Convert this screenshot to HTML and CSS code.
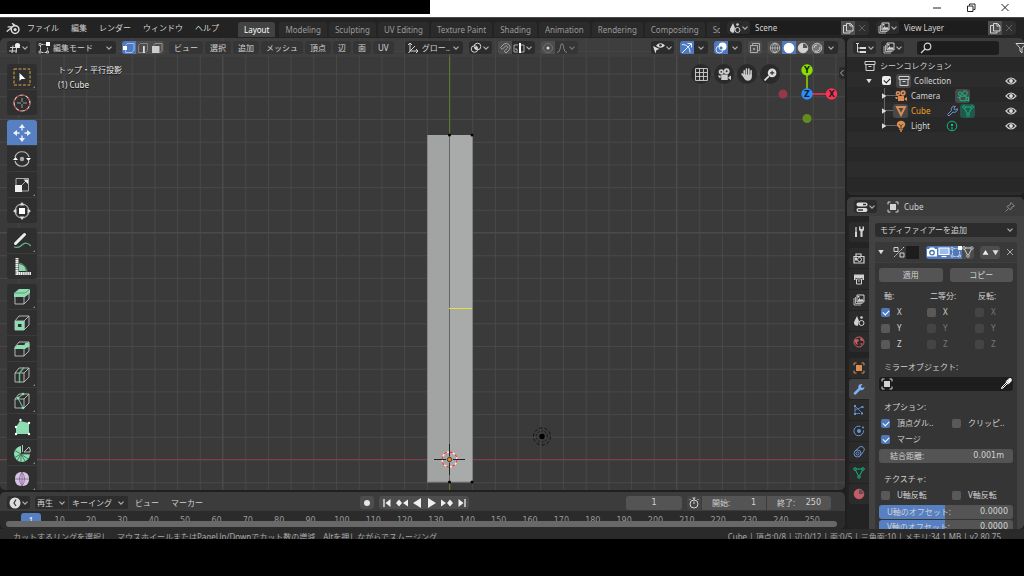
FILE: index.html
```html
<!DOCTYPE html>
<html lang="ja">
<head>
<meta charset="utf-8">
<meta name="viewport" content="width=device-width, initial-scale=1">
<title>Blender</title>
<link rel="stylesheet" href="styles.css">
</head>
<body>
<svg class="defs" aria-hidden="true">
  <symbol id="chev" viewBox="0 0 8 8"><path d="M1.5 2.7 4 5.2 6.500 2.700" fill="none" stroke="currentColor" stroke-width="1.2"/></symbol>
  <symbol id="vmode" viewBox="0 0 12 12"><path d="M1 5.500h10M0 9h8M4 3.500 3 11M7.500 6 7 11" fill="none" stroke="currentColor"/><circle cx="8.500" cy="3.500" r="2.600" fill="#eee"/></symbol>
  <symbol id="edit" viewBox="0 0 12 12"><path d="M2.500 3.500v6M3.500 2.500h4M3.500 10.500h5M9.500 5.500v4" stroke="currentColor" stroke-dasharray="2 1"/><path d="M1 1.500h2v2H1zM1 9h2v2H1zM8.500 9h2v2h-2z" fill="none" stroke="currentColor" stroke-width=".8"/><path d="M8 0h4v4H8z" fill="#fff"/></symbol>
  <symbol id="vert" viewBox="0 0 12 12"><path d="M2.500 3.500 4 1.500h7v6.500l-2 2.500H2.500V8" fill="none" stroke="#a9c5ef" stroke-width=".9"/><path d="M0 4h4v4H0z" fill="#fff"/></symbol>
  <symbol id="edge" viewBox="0 0 12 12"><path d="M1.500 10.500v-7l2-2h7v7l-2 2z" fill="none" stroke="#888" stroke-width=".9"/><path d="M6 4h1.800v7H6z" fill="#ddd"/></symbol>
  <symbol id="face" viewBox="0 0 12 12"><path d="M2.500 3.500 4 1.500h7v7l-2 2" fill="none" stroke="#999" stroke-width=".9"/><path d="M1 4h7.500v7H1z" fill="#ccc"/></symbol>
  <symbol id="orient" viewBox="0 0 12 12"><path d="M3 1v8h8M3 9l5-5M1 3l2-2 2 2M9 7l2 2-2 2M1.500 11 3 9" fill="none" stroke="currentColor"/></symbol>
  <symbol id="pivot" viewBox="0 0 12 12"><circle cx="4.500" cy="7" r="3.300" fill="none" stroke="currentColor"/><circle cx="7.500" cy="4.500" r="3.300" fill="none" stroke="currentColor"/><circle cx="6" cy="6" r="1" fill="#fff"/></symbol>
  <symbol id="magnet" viewBox="0 0 12 12"><path d="M1.500 5.500 5 2a4 4 0 0 1 5.500 5.500L7 11 5.200 9.200 8.500 6A1.500 1.500 0 0 0 6.500 4L3.300 7.300z" fill="none" stroke="#a0a0a0"/></symbol>
  <symbol id="snapto" viewBox="0 0 12 12"><path d="M5 3H1v7h4M8 3h3v7H8M3 8h2M3 6v2" fill="none" stroke="#aaa"/><path d="M6 1h2v10H6z" fill="#fff"/></symbol>
  <symbol id="prop" viewBox="0 0 12 12"><circle cx="6" cy="6" r="4.500" fill="none" stroke="#707070"/><circle cx="6" cy="6" r="1.500" fill="#ddd"/></symbol>
  <symbol id="fall" viewBox="0 0 12 12"><path d="M1 10.500c4 0 3-9 5-9s1 9 5 9" fill="none" stroke="#858585"/></symbol>
  <symbol id="visib" viewBox="0 0 12 12"><path d="M3 3.500q4.500-4.500 9 0-4.500 4.500-9 0z" fill="#ddd"/><circle cx="7.500" cy="3.300" r="1.300" fill="#333"/><path d="M0 4l6.500 3-3 1-1 3.500z" fill="#ddd"/></symbol>
  <symbol id="gizmo" viewBox="0 0 12 12"><path d="M1 2.500c5 0 8 3 8 8M1 11 10 2M6.500 1.500h4v4" fill="none" stroke="#eaf1ff"/></symbol>
  <symbol id="over" viewBox="0 0 12 12"><circle cx="7.500" cy="4.500" r="4" fill="#fff"/><circle cx="4.500" cy="7.500" r="3.500" fill="none" stroke="#dce8ff"/><circle cx="6" cy="6" r="1.500" fill="#4772b3"/></symbol>
  <symbol id="xray" viewBox="0 0 12 12"><path d="M3.500 3.500V1.500h7v7h-2M1.500 3.500h7v7h-7z" fill="none" stroke="#aaa"/><path d="M4 6h2v2H4z" fill="#999"/></symbol>
  <symbol id="wire" viewBox="0 0 12 12"><circle cx="6" cy="6" r="4.800" fill="none" stroke="#bbb" stroke-width=".9"/><path d="M1 6h10M6 1v10M6 1C2.500 3 2.500 9 6 11M6 1c3.500 2 3.500 8 0 10" fill="none" stroke="#bbb" stroke-width=".8"/></symbol>
  <symbol id="solid" viewBox="0 0 12 12"><circle cx="6" cy="6" r="5.300" fill="#fff"/></symbol>
  <symbol id="mat" viewBox="0 0 12 12"><circle cx="6" cy="6" r="4.800" fill="#555" stroke="currentColor" stroke-width=".9"/><path d="M6 6V1.200a4.800 4.800 0 0 0-4.800 4.800zM6 6h4.800A4.800 4.800 0 0 1 6 10.800zM1.200 6H6v4.800A4.800 4.800 0 0 1 1.200 6z" fill="currentColor"/></symbol>
  <symbol id="rend" viewBox="0 0 12 12"><circle cx="6" cy="6" r="4.800" fill="#777" stroke="#bbb"/><path d="M3 6a3 3 0 0 1 3-3M4 9c3 1 5-1 5-4" fill="none" stroke="#ccc"/></symbol>
  <symbol id="scene" viewBox="0 0 12 12"><path d="M4 1 1 7a3 3 0 0 0 4 3.500L6 6z" fill="currentColor"/><circle cx="8.500" cy="8" r="2.500" fill="none" stroke="currentColor"/><circle cx="8.500" cy="2.500" r="1.300" fill="currentColor"/></symbol>
  <symbol id="copy" viewBox="0 0 12 12"><path d="M4.500 1.500h4l2.500 2.500v5H4.500zM8 1.500V4h3M4 3.500H1.500v7.500H8V9.500" fill="none" stroke="currentColor"/></symbol>
  <symbol id="x" viewBox="0 0 12 12"><path d="m3 3 6 6m0-6L3 9" fill="none" stroke="currentColor"/></symbol>
  <symbol id="layers" viewBox="0 0 12 12"><path d="M1 4v7h7M2.500 3v6.500H9.500" fill="none" stroke="currentColor" stroke-width=".8"/><path d="M4 1h7v7H4z" fill="none" stroke="currentColor"/><path d="M4 7.500 6.500 4 8 6l1-1.500 2 3zM4.500 2h2v1.500h-2z" fill="currentColor"/></symbol>
  <symbol id="tree" viewBox="0 0 12 12"><path d="M1 1.500h3M2.500 2v8H5M2.500 6H5" fill="none" stroke="currentColor"/><path d="M5 5h6v2H5zM5 9h6v2H5z" fill="#ddd"/></symbol>
  <symbol id="search" viewBox="0 0 12 12"><circle cx="7.500" cy="4.500" r="3.300" fill="none" stroke="currentColor" stroke-width="1.200"/><path d="m5 7-4 4" stroke="currentColor" stroke-width="1.300"/></symbol>
  <symbol id="filter" viewBox="0 0 12 12"><path d="M1 1.500h10L7 6v5L5 9V6z" fill="none" stroke="currentColor"/></symbol>
  <symbol id="coll" viewBox="0 0 12 12"><path d="M1 1.500h10v3H1zM2 4.500v6h8v-6M4.500 6.500h3" fill="none" stroke="currentColor"/></symbol>
  <symbol id="cam" viewBox="0 0 12 12"><circle cx="3" cy="3.500" r="2.400" fill="currentColor"/><circle cx="8" cy="3" r="2.700" fill="currentColor"/><path d="M3 6h6v5H3zM9.500 8.500 12 7v4L9.500 9.500zM0 7h2.500v2H1z" fill="currentColor"/><circle cx="3" cy="3.500" r=".8" fill="#333"/><circle cx="8" cy="3" r=".9" fill="#333"/></symbol>
  <symbol id="camo" viewBox="0 0 12 12"><circle cx="3" cy="3.700" r="1.700" fill="none" stroke="currentColor"/><circle cx="8" cy="3.200" r="2.300" fill="none" stroke="currentColor"/><path d="M3 6.200h6v4.500H3zM9 8.500 11.500 7v4L9 9.800M.5 7.500H3" fill="none" stroke="currentColor"/></symbol>
  <symbol id="mesh" viewBox="0 0 12 12"><path d="M2 2h8L6 10z" fill="none" stroke="currentColor"/><g fill="#2c3833" stroke="currentColor" stroke-width=".9"><circle cx="2" cy="2" r="1.300"/><circle cx="10" cy="2" r="1.300"/><circle cx="6" cy="10" r="1.300"/></g></symbol>
  <symbol id="tri" viewBox="0 0 12 12"><path d="M2 2h8L6 10z" fill="none" stroke="currentColor" stroke-width="2"/></symbol>
  <symbol id="wrench" viewBox="0 0 12 12"><path d="M1 9.500 5.500 5a3 3 0 0 1 4-3.800L8 3l.3 1.500L10 5l1.300-1.500A3 3 0 0 1 7.300 7L3 11.200A1.300 1.300 0 0 1 1 9.500z" fill="currentColor"/></symbol>
  <symbol id="wrencho" viewBox="0 0 12 12"><path d="M1.500 9.500 5.500 5.500a3 3 0 0 1 4-4L8 3l.3 1.500L10 5l1.300-1.500A3 3 0 0 1 7 7L3 11z" fill="none" stroke="currentColor"/></symbol>
  <symbol id="bulb" viewBox="0 0 12 12"><path d="M4 8C0 5 2 .8 6 .8S12 5 8 8z" fill="currentColor"/><path d="M4 9.200h4M5 11h2" stroke="currentColor" stroke-width="1.300"/><path d="m4 4 2 2 2-2M6 6v2" fill="none" stroke="#333" stroke-width=".8"/></symbol>
  <symbol id="lamp" viewBox="0 0 12 12"><circle cx="6" cy="6" r="4.800" fill="none" stroke="currentColor"/><circle cx="6" cy="5" r="1.300" fill="currentColor"/><path d="M6 7v3" stroke="currentColor"/></symbol>
  <symbol id="eye" viewBox="0 0 12 12"><path d="M1 6q5-6 10 0-5 6-10 0z" fill="none" stroke="#ccc" stroke-width="1.200"/><circle cx="6" cy="6" r="1.900" fill="#ddd"/></symbol>
  <symbol id="props" viewBox="0 0 12 12"><rect x=".5" y="1.500" width="11" height="4" rx="2" fill="#ddd"/><rect x=".5" y="7" width="11" height="4" rx="2" fill="#ddd"/><path d="M7 3.500h3M2 9h5" stroke="#333" stroke-width="1.300"/></symbol>
  <symbol id="obj" viewBox="0 0 12 12"><path d="M1 3.500V1h2.500M8.500 1H11v2.500M11 8.500V11H8.500M3.500 11H1V8.500" fill="none" stroke="currentColor"/><path d="M3 3h6v6H3z" fill="currentColor"/></symbol>
  <symbol id="pin" viewBox="0 0 12 12"><path d="M7 1.500 10.500 5 8 6 6.500 9 3 5.500 6 4zM4.500 7.500 1.500 10.500" fill="none" stroke="currentColor"/></symbol>
  <symbol id="tools" viewBox="0 0 12 12"><path d="M3 1v5M8.500 4.500V10" stroke="currentColor" stroke-width="1.300"/><path d="M2 6h2v5H2zM6 .5h1.500V3h2V.5H11V4L9.500 5.500v5.500h-2V5.500L6 4z" fill="currentColor"/></symbol>
  <symbol id="render" viewBox="0 0 12 12"><path d="M1 4.500h10v6.500H1zM3 4V2h5v2" fill="none" stroke="currentColor" stroke-width="1.200"/><circle cx="6.500" cy="7.500" r="2" fill="none" stroke="currentColor"/><path d="M2 5.500h2v3H2z" fill="currentColor"/></symbol>
  <symbol id="print" viewBox="0 0 12 12"><path d="M1 1.500h10V7H9.500V5h-7v2H1z" fill="currentColor"/><path d="M3.500 6h5v5h-5zM5 8h2" fill="none" stroke="currentColor"/></symbol>
  <symbol id="world" viewBox="0 0 12 12"><circle cx="6" cy="6" r="5" fill="none" stroke="currentColor"/><path d="M2 3.500 5 3l1 2-2 1 1 3-2-1-1.500-3zM8 1.500l2.500 3L8 5 7 3.500zM7.500 7l2 .5L8 10z" fill="currentColor"/></symbol>
  <symbol id="part" viewBox="0 0 12 12"><path d="M2 10V2l7 7M2 6l7-3M2 9.500h5" fill="none" stroke="currentColor" stroke-width=".8"/><path d="M1 1h2v2H1zM8.500 2h2v2h-2zM8 8.500h2v2H8zM1 9h2v2H1z" fill="currentColor"/></symbol>
  <symbol id="phys" viewBox="0 0 12 12"><path d="M7.500 1.500a4.800 4.800 0 1 0 3 4" fill="none" stroke="currentColor"/><circle cx="6" cy="6" r="2" fill="currentColor"/><circle cx="10" cy="2.500" r="1" fill="currentColor"/></symbol>
  <symbol id="cons" viewBox="0 0 12 12"><circle cx="4.500" cy="7.500" r="3.500" fill="none" stroke="currentColor"/><circle cx="4.500" cy="7.500" r="1.500" fill="none" stroke="currentColor"/><path d="M2 5 6 1.500a3 3 0 0 1 4.500 4L7 10" fill="none" stroke="currentColor"/></symbol>
  <symbol id="mirror" viewBox="0 0 12 12"><path d="M1 1.500h4v4H1zM7 7h4v4H7z" fill="none" stroke="currentColor"/><path d="m11 1-10 10" stroke="currentColor" stroke-dasharray="2 1"/></symbol>
  <symbol id="photo" viewBox="0 0 12 12"><path d="M1 3h2l1-1.500h4L9 3h2v7.500H1z" fill="#fff"/><circle cx="6" cy="6.700" r="2.200" fill="#fff" stroke="#4772b3" stroke-width="1.300"/></symbol>
  <symbol id="screen" viewBox="0 0 12 12"><path d="M1 2h10v6.500H1z" fill="#9dbcf0" stroke="#fff" stroke-width="1.200"/><path d="M3.500 10.500h5" stroke="#fff" stroke-width="1.200"/></symbol>
  <symbol id="up" viewBox="0 0 12 12"><path d="M2 9h8L6 2.500z" fill="#eee"/></symbol>
  <symbol id="down" viewBox="0 0 12 12"><path d="M2 3h8L6 9.500z" fill="#ddd"/></symbol>
  <symbol id="drop" viewBox="0 0 12 12"><path d="m7 2 3 3M6 3.500 8.500 6" stroke="#fff" stroke-width="1.600"/><circle cx="10" cy="2" r="1.900" fill="#fff"/><path d="M6.500 4.500 2 9l-.5 1.500L3 10l4.500-4.500" fill="none" stroke="#fff"/></symbol>
  <symbol id="clock" viewBox="0 0 12 12"><circle cx="6" cy="6" r="5.500" fill="#ddd"/><path d="M7 2.500 5 6l2 3" fill="none" stroke="#333" stroke-width="1.200"/></symbol>
  <symbol id="watch" viewBox="0 0 12 12"><circle cx="6" cy="7" r="4" fill="none" stroke="currentColor"/><path d="M6 7V4.500M4.500 1h3M6 1v2M1.500 3l1-1M10.500 3l-1-1" fill="none" stroke="currentColor"/></symbol>
  <symbol id="rec" viewBox="0 0 12 12"><circle cx="6" cy="6" r="3" fill="#e6e6e6"/></symbol>
  <symbol id="first" viewBox="0 0 12 12"><path d="M3 2v8" stroke="#eee" stroke-width="1.300"/><path d="M9.500 2v8L4.500 6z" fill="#eee"/></symbol>
  <symbol id="prevk" viewBox="0 0 12 12"><path d="m0 6 3-3.500L6 6 3 9.500zM12 2.500v7L7 6z" fill="#eee"/></symbol>
  <symbol id="back" viewBox="0 0 12 12"><path d="M10 1v10L2 6z" fill="#eee"/></symbol>
  <symbol id="grid" viewBox="0 0 12 12"><path d="M.5.500h11v11H.5zM4.200.500v11M7.800.500v11M.5 4.200h11M.5 7.800h11" fill="none" stroke="#ccc" stroke-width=".9"/></symbol>
  <symbol id="hand" viewBox="0 0 12 12"><path d="M3 7V2.500M5 6V1M7.200 6V1M9.300 7V2.500M3.500 9 1 5.500" stroke="#ccc" stroke-width="1.500" stroke-linecap="round"/><path d="M2.500 6H10v3q-1 2.800-3.500 2.800T3 10z" fill="#ccc"/></symbol>
  <symbol id="zoom" viewBox="0 0 12 12"><circle cx="7.500" cy="4.500" r="4" fill="#ddd"/><path d="m4.500 7.500-4 4" stroke="#ddd" stroke-width="1.600"/><path d="M5.500 4.500h4M7.500 2.500v4" stroke="#333"/></symbol>
  <symbol id="cube" viewBox="0 0 18 18"><path d="M2 7h9v9H2zM2 7l4-5h10l-5 5M16 2v9l-5 5" fill="none" stroke="#c4c4c4" stroke-width=".9"/></symbol>
</svg>

<div class="titlebar">
  <div class="titlebar-cover"></div>
  <div class="win-buttons">
    <button aria-label="最小化"><svg viewBox="0 0 10 10"><path d="M1 5.500h8" stroke="#222"/></svg></button>
    <button aria-label="元に戻す"><svg viewBox="0 0 10 10"><path d="M1.500 3.500h5.500v5.500H1.500zM3.500 3V1.500h5.500V7H7.500" fill="none" stroke="#222"/></svg></button>
    <button aria-label="閉じる"><svg viewBox="0 0 10 10"><path d="m1.500 1.500 7 7m0-7-7 7" stroke="#222"/></svg></button>
  </div>
</div>

<header class="topbar">
  <button class="logo" aria-label="Blender"><svg viewBox="0 0 14 12"><path d="M1 8.500 7.500 3.500M2 4.500h6M6 1.500l5 3.500" stroke="#ddd" stroke-width="1.300" stroke-linecap="round"/><circle cx="8.500" cy="7" r="3.600" fill="#232323" stroke="#ddd" stroke-width="1.400"/><circle cx="8.500" cy="7" r="1.500" fill="#ddd"/></svg></button>
  <nav class="menus">
    <button>ファイル</button><button>編集</button><button>レンダー</button><button>ウィンドウ</button><button>ヘルプ</button>
  </nav>
  <nav class="tabs">
    <button class="active">Layout</button><button>Modeling</button><button>Sculpting</button><button>UV Editing</button><button>Texture Paint</button><button>Shading</button><button>Animation</button><button>Rendering</button><button>Compositing</button><button>Scripting</button>
  </nav>
  <div class="idblock">
    <button class="drop-btn" aria-label="シーン選択"><svg class="i"><use href="#scene"/></svg><svg class="c"><use href="#chev"/></svg></button>
    <input aria-label="シーン" value="Scene">
    <button class="sq" aria-label="新規シーン"><svg class="i"><use href="#copy"/></svg></button>
    <button class="sq dim" aria-label="シーン削除"><svg class="i"><use href="#x"/></svg></button>
  </div>
  <div class="idblock">
    <button class="drop-btn" aria-label="レイヤー選択"><svg class="i"><use href="#layers"/></svg><svg class="c"><use href="#chev"/></svg></button>
    <input aria-label="ビューレイヤー" value="View Layer">
    <button class="sq" aria-label="新規レイヤー"><svg class="i"><use href="#copy"/></svg></button>
    <button class="sq dim" aria-label="レイヤー削除"><svg class="i"><use href="#x"/></svg></button>
  </div>
</header>

<main class="workspace">
  <div class="left">
    <section class="viewport">
      <svg class="canvas" aria-label="3Dビュー">
        <defs>
          <pattern id="gridp" x="449.500" y="421.500" width="22.700" height="22.700" patternUnits="userSpaceOnUse"><path d="M0 0H22.700M0 0V22.700" stroke="#484848" stroke-width="2"/></pattern>
        </defs>
        <rect width="100%" height="100%" fill="url(#gridp)"/>
        <path d="M0 194.500h846M222.500 0v453M676.500 0v453" stroke="#4b4b4b"/>
        <path d="M0 421.500h846" stroke="#853d48"/>
        <path d="M449.500 0v453" stroke="#5e7a24"/>
        <path d="M427 97h22v347h-22z" fill="#a2a4a3"/>
        <path d="M449 97h23.500v347H449z" fill="#a8abaa"/>
        <path d="M427.500 97v347M472.500 97v347M427 444h45" stroke="#828484" fill="none"/>
        <path d="M449.500 97v347" stroke="#626464"/>
        <path d="M449 270.500h23" stroke="#e5e03c"/>
        <g fill="#000"><circle cx="449.500" cy="97" r="1.500"/><circle cx="472" cy="97" r="1.500"/><circle cx="449.500" cy="444" r="1.500"/><circle cx="472" cy="444" r="1.500"/></g>
        <circle cx="449.500" cy="421.500" r="7.500" fill="none" stroke="#f2eaea" stroke-width="1.300"/>
        <circle cx="449.500" cy="421.500" r="7.500" fill="none" stroke="#e33" stroke-width="1.300" stroke-dasharray="3 2.900"/>
        <path d="M434 421.500h12M453 421.500h12M449.500 406v12M449.500 425v12" stroke="#222"/>
        <circle cx="449.500" cy="421.500" r="2.200" fill="#dd8a28" stroke="#533"/>
        <g fill="none" stroke="#111"><circle cx="542" cy="398.500" r="5.500" stroke-dasharray="1.500 2"/><circle cx="542" cy="398.500" r="8.500" stroke-dasharray="3 2.300"/></g>
        <circle cx="542" cy="398.500" r="2.700" fill="#000"/>
      </svg>
      <div class="bar vheader">
        <button class="drop-btn" aria-label="エディタータイプ"><svg class="i"><use href="#vmode"/></svg><svg class="c"><use href="#chev"/></svg></button>
        <label class="pick mode"><svg class="i"><use href="#edit"/></svg><select aria-label="モード"><option>編集モード</option></select><svg class="c"><use href="#chev"/></svg></label>
        <div class="seg">
          <button class="on" aria-label="頂点選択"><svg class="i"><use href="#vert"/></svg></button><button aria-label="辺選択"><svg class="i"><use href="#edge"/></svg></button><button aria-label="面選択"><svg class="i"><use href="#face"/></svg></button>
        </div>
        <nav class="vmenus"><button>ビュー</button><button>選択</button><button>追加</button><button>メッシュ</button><button>頂点</button><button>辺</button><button>面</button><button>UV</button></nav>
        <label class="pick orient"><svg class="i"><use href="#orient"/></svg><select aria-label="座標系"><option>グロー..</option></select><svg class="c"><use href="#chev"/></svg></label>
        <button class="drop-btn" aria-label="ピボット"><svg class="i"><use href="#pivot"/></svg><svg class="c"><use href="#chev"/></svg></button>
        <div class="seg"><button aria-label="スナップ"><svg class="i"><use href="#magnet"/></svg></button><button class="drop-btn" aria-label="スナップ対象"><svg class="i"><use href="#snapto"/></svg><svg class="c"><use href="#chev"/></svg></button></div>
        <div class="seg"><button aria-label="プロポーショナル編集"><svg class="i"><use href="#prop"/></svg></button><button class="drop-btn off" aria-label="減衰"><svg class="i"><use href="#fall"/></svg><svg class="c"><use href="#chev"/></svg></button></div>
        <span class="grow"></span>
        <button class="drop-btn" aria-label="可視性"><svg class="i"><use href="#visib"/></svg><svg class="c"><use href="#chev"/></svg></button>
        <div class="seg"><button class="on" aria-label="ギズモ"><svg class="i"><use href="#gizmo"/></svg></button><button class="dk" aria-label="ギズモ設定"><svg class="c"><use href="#chev"/></svg></button></div>
        <div class="seg"><button class="on" aria-label="オーバーレイ"><svg class="i"><use href="#over"/></svg></button><button class="dk" aria-label="オーバーレイ設定"><svg class="c"><use href="#chev"/></svg></button></div>
        <div class="seg"><button aria-label="透過表示"><svg class="i"><use href="#xray"/></svg></button></div>
        <div class="seg"><button aria-label="ワイヤーフレーム"><svg class="i"><use href="#wire"/></svg></button><button class="on" aria-label="ソリッド"><svg class="i"><use href="#solid"/></svg></button><button aria-label="マテリアル"><svg class="i"><use href="#mat"/></svg></button><button aria-label="レンダー"><svg class="i"><use href="#rend"/></svg></button><button class="dk" aria-label="シェーディング設定"><svg class="c"><use href="#chev"/></svg></button></div>
      </div>
      <div class="vbody">
        <div class="toolbar">
          <div class="tgroup">
            <button class="more" aria-label="ボックス選択"><svg viewBox="0 0 18 18"><path d="M1 1h16v16H1z" fill="none" stroke="#dba63f" stroke-dasharray="3 1.500"/><path d="M6.500 5v8l2-2h4z" fill="#fff"/></svg></button>
            <button aria-label="カーソル"><svg viewBox="0 0 18 18"><circle cx="9" cy="9" r="8" fill="none" stroke="#ddd" stroke-width="1.200"/><circle cx="9" cy="9" r="8" fill="none" stroke="#b33" stroke-width="1.200" stroke-dasharray="3.500 2.800"/><path d="M4 9h4M10 9h4M9 4v4M9 10v4" stroke="#999"/></svg></button>
          </div>
          <div class="tgroup">
            <button class="on" aria-label="移動"><svg viewBox="0 0 18 18"><path d="M9 0l3 4H6zM9 18l3-4H6zM0 9l4-3v6zM18 9l-4-3v6z" fill="#eef"/><path d="M9 4v2.500M9 11.500V14M4 9h2.500M11.500 9H14" stroke="#eef" stroke-width="1.300"/></svg></button>
            <button aria-label="回転"><svg viewBox="0 0 18 18"><path d="M2 7a7.300 7.300 0 0 1 14 0M2 11a7.300 7.300 0 0 0 14 0" fill="none" stroke="#bbb" stroke-width="1.200"/><circle cx="9" cy="9" r="2.200" fill="#aaa"/><path d="M0 10l2.500-3L5 10zM13 8h5l-2.500 3z" fill="#fff"/></svg></button>
            <button class="more" aria-label="スケール"><svg viewBox="0 0 18 18"><path d="M3 2.500h12.500V15H3zM9 9l5-5" fill="none" stroke="#aaa"/><path d="M2 9h7v7H2zM10.500 3.500H15V8z" fill="#eee"/></svg></button>
            <button aria-label="トランスフォーム"><svg viewBox="0 0 18 18"><circle cx="9" cy="9" r="7" fill="none" stroke="#aaa" stroke-width="1.200"/><path d="M6 6h6v6H6z" fill="#fff"/><path d="M9 0l2.500 3.500h-5zM9 18l2.500-3.500h-5zM0 9l3.500-2.500v5zM18 9l-3.500-2.500v5z" fill="#ddd"/></svg></button>
          </div>
          <div class="tgroup">
            <button class="more" aria-label="アノテート"><svg viewBox="0 0 18 18"><path d="M2.500 11.500 11.500 2.500" stroke="#eee" stroke-width="3" stroke-linecap="round"/><path d="M1 15c3 1 5 1 8-2s6-2 9 1" fill="none" stroke="#62b78c" stroke-width="1.200"/></svg></button>
            <button aria-label="メジャー"><svg viewBox="0 0 18 18"><path d="M6 13V6a7 7 0 0 1 7 7z" fill="#8ed5ad"/><path d="M6 5a9 9 0 0 1 8 9" fill="none" stroke="#4e9271"/><path d="M4 0v15.500h14" fill="none" stroke="#eee" stroke-width="3" stroke-dasharray="1.500 .4"/></svg></button>
          </div>
          <div class="tgroup">
            <button class="more" aria-label="押し出し"><svg viewBox="0 0 18 18"><use href="#cube"/><path d="M1 5l5-4h11v4l-5 4H1z" fill="#8edcb1"/><path d="M1 5h11l5-4" fill="none" stroke="#397557" stroke-width=".6"/></svg></button>
            <button aria-label="面を差し込む"><svg viewBox="0 0 18 18"><use href="#cube"/><path d="M3.500 8.500H10v6H3.500z" fill="none" stroke="#8edcb1" stroke-width="3"/></svg></button>
            <button aria-label="ベベル"><svg viewBox="0 0 18 18"><use href="#cube"/><path d="M1 9l3-4h9l3 1-4 3z" fill="#8edcb1"/><circle cx="14" cy="5" r="2.500" fill="#8edcb1"/></svg></button>
            <button class="more" aria-label="ループカット"><svg viewBox="0 0 18 18"><use href="#cube"/><path d="M6.500 17V7L11 1.500" fill="none" stroke="#63b58c" stroke-width="1.500"/></svg></button>
            <button class="more" aria-label="ナイフ"><svg viewBox="0 0 18 18"><use href="#cube"/><path d="M10 2 5 6l5 10" fill="none" stroke="#63b58c" stroke-width="1.200"/><g fill="#8edcb1"><circle cx="10" cy="2" r="1.300"/><circle cx="5" cy="6" r="1.300"/><circle cx="10" cy="16" r="1.300"/></g></svg></button>
            <button aria-label="ポリビルド"><svg viewBox="0 0 18 18"><path d="M3 16V9l4-6 9 2v11z" fill="#8edcb1"/><g fill="#fff"><circle cx="3" cy="16" r="1.200"/><circle cx="3" cy="9" r="1.200"/><circle cx="7.500" cy="2" r="1.200"/><circle cx="16" cy="5" r="1.200"/><circle cx="16" cy="16" r="1.200"/></g></svg></button>
            <button class="more" aria-label="スピン"><svg viewBox="0 0 18 18"><path d="M8 10V2a8 8 0 1 0 9 8z" fill="#8edcb1"/><path d="M8 10 1 6M8 10l-7 4M8 10v8M8 10l7 5M8 10h9M8 10l-4 7M8 10l4 7" stroke="#37634e" stroke-width=".8"/><path d="M9.500 8V1M11 8l5-5q2 3 1 5z" fill="none" stroke="#bbb"/></svg></button>
            <button class="more" aria-label="スムーズ"><svg viewBox="0 0 18 18"><rect x="2" y="2" width="14" height="14" rx="6" fill="#d9c2e6"/><path d="M2 9h14M9 2v14M9 2q-5 7 0 14M9 2q5 7 0 14" fill="none" stroke="#756481" stroke-width=".8"/></svg></button>
          </div>
        </div>
        <div class="vinfo"><div>トップ・平行投影</div><div>(1) Cube</div></div>
        <div class="navbtns">
          <button aria-label="透視/平行"><svg><use href="#grid"/></svg></button><button aria-label="カメラ"><svg><use href="#cam"/></svg></button><button aria-label="パン"><svg><use href="#hand"/></svg></button><button aria-label="ズーム"><svg><use href="#zoom"/></svg></button>
        </div>
        <svg class="axes" viewBox="0 0 62 62">
          <path d="M30 8v22" stroke="#8bdc00" stroke-width="1.500"/><path d="M30 31h24" stroke="#ff3352" stroke-width="1.500"/>
          <circle cx="6" cy="31" r="4.500" fill="#953847"/><circle cx="30" cy="55.500" r="4.500" fill="#638b1e"/>
          <circle cx="30" cy="7" r="5.700" fill="#8bdc00"/><circle cx="30" cy="31" r="5.700" fill="#2b90ff"/><circle cx="54.500" cy="31" r="5.700" fill="#ff3352"/>
          <text x="30" y="10">Y</text><text x="30" y="34">Z</text><text x="54.500" y="34">X</text>
        </svg>
        <button class="side" aria-label="サイドバー"><svg viewBox="0 0 6 10"><path d="M4.500 2 1.500 5l3 3" fill="none" stroke="#aaa"/></svg></button>
      </div>
    </section>

    <section class="timeline">
      <div class="bar theader">
        <button class="drop-btn" aria-label="エディタータイプ"><svg class="i"><use href="#clock"/></svg><svg class="c"><use href="#chev"/></svg></button>
        <div class="seg tsel"><button>再生<svg class="c"><use href="#chev"/></svg></button><button>キーイング<svg class="c"><use href="#chev"/></svg></button></div>
        <nav class="tmenus"><button>ビュー</button><button>マーカー</button></nav>
        <div class="transport">
          <div class="seg"><button aria-label="自動キー"><svg class="i"><use href="#rec"/></svg></button></div>
          <div class="seg play"><button aria-label="最初"><svg class="i"><use href="#first"/></svg></button><button aria-label="前のキー"><svg class="i"><use href="#prevk"/></svg></button><button aria-label="逆再生"><svg class="i"><use href="#back"/></svg></button><button aria-label="再生"><svg class="i flip"><use href="#back"/></svg></button><button aria-label="次のキー"><svg class="i flip"><use href="#prevk"/></svg></button><button aria-label="最後"><svg class="i flip"><use href="#first"/></svg></button></div>
        </div>
        <input class="num frame" aria-label="現在のフレーム" value="1">
        <div class="range">
          <button class="sq" aria-label="プレビュー範囲"><svg class="i"><use href="#watch"/></svg></button>
          <label>開始:<input class="num" value="1"></label><label>終了:<input class="num" value="250"></label>
        </div>
      </div>
      <div class="ruler">
        <span class="playhead">1</span>
        <div class="ticks"><span>10</span><span>20</span><span>30</span><span>40</span><span>50</span><span>60</span><span>70</span><span>80</span><span>90</span><span>100</span><span>110</span><span>120</span><span>130</span><span>140</span><span>150</span><span>160</span><span>170</span><span>180</span><span>190</span><span>200</span><span>210</span><span>220</span><span>230</span><span>240</span><span>250</span></div>
      </div>
      <div class="scroll"></div>
    </section>
  </div>

  <aside class="right">
    <section class="outliner">
      <div class="bar oheader">
        <button class="drop-btn" aria-label="エディタータイプ"><svg class="i"><use href="#tree"/></svg><svg class="c"><use href="#chev"/></svg></button>
        <button class="drop-btn" aria-label="表示モード"><svg class="i"><use href="#layers"/></svg><svg class="c"><use href="#chev"/></svg></button>
        <label class="search"><svg class="i"><use href="#search"/></svg><input aria-label="検索"></label>
        <button class="filter" aria-label="フィルター"><svg class="i"><use href="#filter"/></svg></button>
      </div>
      <div class="rows">
        <div class="row r0"><svg class="i"><use href="#coll"/></svg><span>シーンコレクション</span></div>
        <div class="row r1"><svg class="tw"><use href="#down"/></svg><input type="checkbox" class="white" aria-label="Collection" checked><span class="hl"><svg class="i"><use href="#coll"/></svg></span><span>Collection</span><svg class="i eye"><use href="#eye"/></svg></div>
        <div class="row r2"><svg class="tw side-tw"><use href="#down"/></svg><span class="hl orange none"><svg class="i"><use href="#cam"/></svg></span><span class="nm">Camera</span><span class="hl green gapcam"><svg class="i"><use href="#camo"/></svg></span><svg class="i eye"><use href="#eye"/></svg></div>
        <div class="row r2"><svg class="tw side-tw"><use href="#down"/></svg><span class="hl orange"><svg class="i"><use href="#tri"/></svg></span><span class="nm sel">Cube</span><svg class="i blue"><use href="#wrencho"/></svg><span class="hl green deep"><svg class="i"><use href="#mesh"/></svg></span><svg class="i eye"><use href="#eye"/></svg></div>
        <div class="row r2 end"><svg class="tw side-tw"><use href="#down"/></svg><span class="hl orange none"><svg class="i"><use href="#bulb"/></svg></span><span class="nm">Light</span><svg class="i green"><use href="#lamp"/></svg><svg class="i eye"><use href="#eye"/></svg></div>
      </div>
    </section>

    <section class="props">
      <div class="bar pheader">
        <button class="drop-btn" aria-label="エディタータイプ"><svg class="i"><use href="#props"/></svg><svg class="c"><use href="#chev"/></svg></button>
        <svg class="i"><use href="#obj"/></svg><span>Cube</span><span class="grow"></span>
        <button class="pin" aria-label="ピン"><svg class="i"><use href="#pin"/></svg></button>
      </div>
      <div class="pbody">
        <nav class="ptabs">
          <div><button aria-label="ツール"><svg class="i"><use href="#tools"/></svg></button></div>
          <div><button aria-label="レンダー"><svg class="i"><use href="#render"/></svg></button><button aria-label="出力"><svg class="i"><use href="#print"/></svg></button><button aria-label="ビューレイヤー"><svg class="i"><use href="#layers"/></svg></button><button aria-label="シーン"><svg class="i"><use href="#scene"/></svg></button><button class="red" aria-label="ワールド"><svg class="i"><use href="#world"/></svg></button></div>
          <div><button class="orange" aria-label="オブジェクト"><svg class="i"><use href="#obj"/></svg></button><button class="cur" aria-label="モディファイアー"><svg class="i"><use href="#wrench"/></svg></button><button class="blue" aria-label="パーティクル"><svg class="i"><use href="#part"/></svg></button><button class="blue" aria-label="物理演算"><svg class="i"><use href="#phys"/></svg></button><button class="blue" aria-label="コンストレイント"><svg class="i"><use href="#cons"/></svg></button><button class="green" aria-label="データ"><svg class="i"><use href="#mesh"/></svg></button><button class="red" aria-label="マテリアル"><svg class="i"><use href="#mat"/></svg></button></div>
        </nav>
        <div class="pcontent">
          <label class="pick addmod"><select aria-label="モディファイアーを追加"><option>モディファイアーを追加</option></select><svg class="c"><use href="#chev"/></svg></label>
          <div class="modbox">
            <div class="modhead">
              <svg class="tw"><use href="#down"/></svg><svg class="i"><use href="#mirror"/></svg><input class="mname" aria-label="名前">
              <div class="seg modes"><button class="on" aria-label="レンダー"><svg class="i"><use href="#photo"/></svg></button><button class="on" aria-label="リアルタイム"><svg class="i"><use href="#screen"/></svg></button><button class="on" aria-label="編集モード"><svg class="i"><use href="#edit"/></svg></button><button aria-label="ケージ"><svg class="i"><use href="#mesh"/></svg></button></div>
              <div class="seg updn"><button aria-label="上へ"><svg class="i"><use href="#up"/></svg></button><button aria-label="下へ"><svg class="i"><use href="#down"/></svg></button></div>
              <button class="close" aria-label="削除"><svg class="i"><use href="#x"/></svg></button>
            </div>
            <div class="modbody">
              <div class="two"><button class="btn">適用</button><button class="btn">コピー</button></div>
              <div class="axesgrid">
                <span>軸:</span><span>二等分:</span><span>反転:</span>
                <label><input type="checkbox" checked>X</label><label><input type="checkbox">X</label><label class="dis"><input type="checkbox" disabled>X</label>
                <label><input type="checkbox">Y</label><label class="dis"><input type="checkbox" disabled>Y</label><label class="dis"><input type="checkbox" disabled>Y</label>
                <label><input type="checkbox">Z</label><label class="dis"><input type="checkbox" disabled>Z</label><label class="dis"><input type="checkbox" disabled>Z</label>
              </div>
              <label class="sub first" for="mobj">ミラーオブジェクト:</label>
              <div class="objfield"><svg class="i"><use href="#obj"/></svg><input id="mobj"><button aria-label="スポイト"><svg class="i"><use href="#drop"/></svg></button></div>
              <div class="sub">オプション:</div>
              <div class="checks"><label><input type="checkbox" checked>頂点グル..</label><label><input type="checkbox">クリッピ..</label><label><input type="checkbox" checked>マージ</label></div>
              <label class="numrow">結合距離:<input class="num" value="0.001m"></label>
              <div class="sub">テクスチャ:</div>
              <div class="checks"><label><input type="checkbox">U軸反転</label><label><input type="checkbox">V軸反転</label></div>
              <label class="numrow slide">U軸のオフセット:<input class="num" value="0.0000"></label>
              <label class="numrow slide last">V軸のオフセット:<input class="num" value="0.0000"></label>
            </div>
          </div>
        </div>
      </div>
    </section>
  </aside>
</main>
<footer class="status"><span>カットするリングを選択し、マウスホイールまたはPageUp/Downでカット数の増減、Altを押しながらでスムージング</span><span>Cube | 頂点:0/8 | 辺:0/12 | 面:0/5 | 三角面:10 | メモリ:34.1 MB | v2.80.75</span></footer>
<div class="letterbox"></div>
</body>
</html>
```
FILE: styles.css
```css
* { box-sizing: border-box; }
body {
  margin: 0;
  height: 100vh;
  display: flex;
  flex-direction: column;
  overflow: hidden;
  background: #1f1f1f;
  color: #d2d2d2;
  font: 8px/12px "Noto Sans", "Noto Sans CJK JP", sans-serif;
}
button, input, select {
  font: inherit;
  color: inherit;
  background: none;
  border: 0;
  padding: 0;
  margin: 0;
  min-width: 0;
  border-radius: 0;
  outline: 0;
}
button { display: flex; align-items: center; justify-content: center; white-space: nowrap; }
select { appearance: none; }
svg { display: block; flex: none; }
.defs { position: absolute; width: 0; height: 0; }
.i { width: 12px; height: 12px; }
.c { width: 8px; height: 8px; color: #b0b0b0; }
.grow { flex: 1; }
.num { font-family: "DejaVu Sans", sans-serif; }
.orange { color: #d98d55; }
.blue { color: #6b93d3; }
.green { color: #12b886; }
.red { color: #c85c66; }

/* Window frame */
.titlebar {
  flex: none;
  height: 17px;
  display: flex;
  justify-content: space-between;
  align-items: flex-start;
  background: #fff;
}
.titlebar-cover { width: 42%; height: 14px; background: #000; }
.win-buttons { display: flex; gap: 24px; padding: 2px 14px 0 0; }
.win-buttons svg { width: 10px; height: 11px; }

.topbar {
  flex: none;
  height: 21px;
  display: flex;
  align-items: center;
  padding: 0 8px 0 6px;
  border-top: 1px solid #4a4a4a;
  background: #232323;
}
.logo svg { width: 15px; height: 13px; }
.menus { display: flex; width: 216px; }
.menus button { padding: 0 6px; }
.tabs {
  flex: 1;
  min-width: 0;
  display: flex;
  align-self: flex-end;
  gap: 2px;
  overflow: hidden;
  margin: 0 7px 1px 1px;
}
.tabs button {
  flex: none;
  height: 15px;
  padding: 0 6px;
  border-radius: 3px 3px 0 0;
  background: #2b2b2b;
  color: #9a9a9a;
}
.tabs .active { margin-right: 2px; background: #424242; color: #fff; }
.idblock { display: flex; height: 14px; width: 142px; border-radius: 3px; background: #1d1d1d; overflow: hidden; }
.idblock + .idblock { margin-left: 7px; width: 140px; }
.idblock input { flex: 1; padding-left: 5px; }
.idblock .sq { width: 14px; background: #505050; }
.idblock .dim { background: #2f2f2f; color: #606060; }
.drop-btn { width: 23px; height: 13px; background: #2c2c2c; border-radius: 3px; }

/* Areas */
.workspace { flex: 1; min-height: 0; display: flex; gap: 2px; }
.left { flex: 1; min-width: 0; display: flex; flex-direction: column; gap: 2px; }
.right { flex: none; width: 177px; display: flex; flex-direction: column; gap: 2px; }
.bar { display: flex; align-items: center; flex: none; height: 19px; }
.seg { display: flex; height: 13px; border-radius: 3px; overflow: hidden; }
.seg button { width: 14px; background: #4d4d4d; }
.seg .on { background: #4f79bd; }
.seg .dk, .seg .drop-btn { background: #2c2c2c; border-radius: 0; }
.seg .drop-btn { width: 23px; }
.seg .off { background: #353535; }
.off .c { color: #777; }
.pick { display: flex; align-items: center; height: 13px; padding: 0 3px 0 2px; border-radius: 3px; background: #2c2c2c; }
.pick select { flex: 1; padding-left: 3px; }

.viewport {
  position: relative;
  flex: 1;
  min-height: 0;
  display: flex;
  flex-direction: column;
  overflow: hidden;
  border-radius: 5px;
  background: #3a3a3a;
}
.canvas { position: absolute; inset: 0; width: 100%; height: 100%; }
.vheader { position: relative; gap: 6px; padding: 0 7px; background: #42424280; }
.mode { width: 80px; }
.orient { width: 58px; margin-left: 5px; }
.vmenus { display: flex; gap: 2px; margin-left: -1px; }
.vmenus button { height: 13px; padding: 0 5px; background: #353535; border-radius: 3px; }
.vbody { position: relative; flex: 1; min-height: 0; display: flex; align-items: flex-start; }
.toolbar { width: 30px; margin: 7px 0 0 7px; display: flex; flex-direction: column; gap: 5px; }
.tgroup { display: flex; flex-direction: column; gap: 1px; border-radius: 3px; overflow: hidden; }
.tgroup button { position: relative; width: 30px; height: 25px; background: #2f2f2f; }
.tgroup .on { background: #5680c2; }
.tgroup svg { width: 18px; height: 18px; }
.more::after {
  content: "";
  position: absolute;
  right: 2px;
  bottom: 1px;
  border: 1px solid transparent;
  border-right-color: #888;
  border-bottom-color: #888;
}
.vinfo { padding: 5px 0 0 21px; flex: 1; line-height: 15px; color: #eee; text-shadow: 0 1px 1px #000; }
.navbtns { display: flex; gap: 3px; padding: 7px 0 0; margin-right: -3px; }
.navbtns button { width: 20px; height: 20px; border-radius: 50%; background: #2a2a2a; color: #ccc; }
.navbtns svg { width: 13px; height: 13px; }
.axes { width: 62px; height: 62px; margin-top: 6px; }
.axes text { font: bold 8px "DejaVu Sans", sans-serif; text-anchor: middle; fill: #15202a; }
.side { width: 6px; height: 12px; margin-top: 10px; background: #2b2b2b; border-radius: 3px 0 0 3px; }
.side svg { width: 6px; height: 10px; }

/* Timeline */
.timeline { flex: none; height: 37px; display: flex; flex-direction: column; overflow: hidden; border-radius: 5px; background: #2b2b2b; }
.theader { padding: 2px 14px 0 7px; gap: 5px; background: #3c3c3c; }
.tsel button { background: #2d2d2d; gap: 5px; width: 33px; margin-right: 1px; }
.tsel button + button { width: 59px; }
.tmenus { display: flex; gap: 12px; padding-left: 1px; }
.transport { display: flex; gap: 5px; flex: 1; justify-content: center; }
.play button { width: 15px; }
.flip { transform: scaleX(-1); }
.frame { width: 56px; height: 14px; text-align: center; background: #545454; border-radius: 3px; }
.range { display: flex; height: 14px; border-radius: 3px; overflow: hidden; gap: 1px; }
.range .sq { width: 14px; background: #454545; }
.range label { display: flex; align-items: center; width: 64px; padding: 0 10px; background: #545454; }
.range input { flex: 1; width: 20px; text-align: right; }
.ruler { position: relative; height: 10px; padding: 0 17px 0 44px; overflow: hidden; }
.ticks { display: grid; grid-template-columns: repeat(25, 1fr); text-align: center; color: #999; font-family: "DejaVu Sans", sans-serif; line-height: 20px; }
.playhead { position: absolute; left: 21px; top: 2px; width: 20px; height: 12px; border-radius: 3px; background: #5680c2; color: #fff; text-align: center; line-height: 15px; }
.scroll { height: 6px; margin: 0 8px 0 6px; border-radius: 3px; background: #686868; }

/* Outliner */
.outliner { flex: none; height: 157px; overflow: hidden; border-radius: 5px; background: #282828; }
.oheader { gap: 5px; padding-left: 6px; background: #3c3c3c; }
.search { display: flex; align-items: center; flex: 1; height: 14px; margin-left: 8px; padding-left: 3px; border-radius: 3px; background: #1d1d1d; }
.search input { width: 20px; flex: 1; }
.filter { width: 9px; margin-left: 11px; overflow: hidden; justify-content: flex-start; }
.rows { padding-top: 1px; background: repeating-linear-gradient(#282828 0 15px, #2c2c2c 15px 30px); height: 138px; }
.row { display: flex; align-items: center; height: 15px; gap: 2px; padding-right: 7px; }
.r0 { padding-left: 17px; gap: 4px; }
.r1 { padding-left: 18px; }
.r2 {
  padding-left: 33px;
  background:
    linear-gradient(#666, #666) 37px 0 / 1px 100% no-repeat,
    linear-gradient(#666, #666) 37px 7px / 14px 1px no-repeat;
}
.r2.end { background-size: 1px 7px, 14px 1px; }
.tw { width: 8px; height: 8px; }
.side-tw { transform: rotate(-90deg); }
.r1 .tw { margin-right: 7px; }
.hl { width: 15px; height: 14px; display: flex; align-items: center; justify-content: center; border-radius: 3px; background: #484848; }
.hl + span { margin-left: 1px; }
.hl.none { background: none; }
.r2 .hl.orange { margin-left: 3px; }
.nm { width: 33px; }
.sel { color: #f0a020; }
.r2 .gapcam { margin-left: 9px; }
.r2 .deep { background: #24574a; }
.row .eye { margin-left: auto; }

/* Properties */
.props { flex: 1; min-height: 0; display: flex; flex-direction: column; overflow: hidden; border-radius: 5px; background: #232323; }
.pheader { gap: 5px; padding: 0 8px 0 7px; background: #3c3c3c; }
.pheader .i { margin-left: 5px; }
.pheader .drop-btn .i { margin: 0; }
.pin { color: #888; }
.pbody { flex: 1; min-height: 0; display: flex; }
.ptabs { width: 22px; padding: 6px 0 0 2px; display: flex; flex-direction: column; gap: 6px; }
.ptabs div { display: flex; flex-direction: column; gap: 1px; }
.ptabs button { width: 20px; height: 20px; border-radius: 3px 0 0 3px; background: #2b2b2b; }
.ptabs .cur { background: #424242; color: #7fb0f5; }
.pcontent { flex: 1; min-width: 0; padding: 7px 7px 0 6px; background: #424242; }
.addmod { height: 14px; background: #2c2c2c; }
.addmod select { padding-left: 3px; }
.modbox { margin-top: 5px; background: #353535; border-radius: 3px; }
.modhead { display: flex; align-items: center; height: 21px; padding: 0 1px 0 2px; border-bottom: 1px solid #3f3f3f; background: #393939; border-radius: 3px 3px 0 0; }
.modhead > .i { margin-left: 8px; }
.mname { width: 13px; height: 13px; margin: 0 7px 0 1px; background: #1d1d1d; }
.modes button { width: 12px; }
.updn { margin-left: 6px; }
.updn button { width: 10px; }
.updn .i { width: 9px; height: 9px; }
.close { margin-left: auto; color: #aaa; }
.modbody { padding: 5px 4px 0; }
.two { display: grid; grid-template-columns: 1fr 1fr; gap: 7px; }
.btn { height: 14px; background: #545454; border-radius: 3px; }
.axesgrid { display: grid; grid-template-columns: 46px 48px 1fr; row-gap: 4px; padding: 8px 0 0 2px; }
.axesgrid span { padding: 0 0 0 3px; }
label { display: flex; align-items: center; }
input[type="checkbox"] { appearance: none; flex: none; width: 9px; height: 9px; margin-right: 7px; border-radius: 2px; background: #595959; position: relative; }
input[type="checkbox"]:checked { background: #4f79bd; }
input[type="checkbox"]:checked::after { content: ""; position: absolute; left: 3px; top: 1px; width: 3px; height: 5px; border: solid #fff; border-width: 0 1px 1px 0; transform: rotate(45deg); }
input.white[type="checkbox"]:checked { background: #eee; margin-right: 3px; }
input.white[type="checkbox"]:checked::after { border-color: #222; }
.dis { color: #777; }
.dis input[type="checkbox"] { background: #444; }
.sub { padding: 10px 0 4px 5px; }
.first { padding-top: 11px; }
.objfield { display: flex; align-items: center; height: 14px; padding: 0 1px 0 2px; border-radius: 3px; background: #1d1d1d; }
.objfield input { flex: 1; }
.checks { display: grid; grid-template-columns: 71px 1fr; row-gap: 4px; padding-left: 2px; }
.numrow { height: 14px; margin-top: 4px; padding: 0 9px 0 11px; border-radius: 3px; background: #545454; }
.numrow input { flex: 1; text-align: right; }
.slide { padding: 0 5px 0 8px; background: linear-gradient(90deg, #5680c2 49%, #545454 49%); white-space: nowrap; }
.last { margin-top: 1px; }

.status { flex: none; height: 10px; display: flex; justify-content: space-between; padding: 1px 23px 0 13px; overflow: hidden; white-space: nowrap; line-height: 14px; background: #2a2a2a; color: #a8a8a8; }
.letterbox { flex: none; height: 37px; background: #000; }
```
